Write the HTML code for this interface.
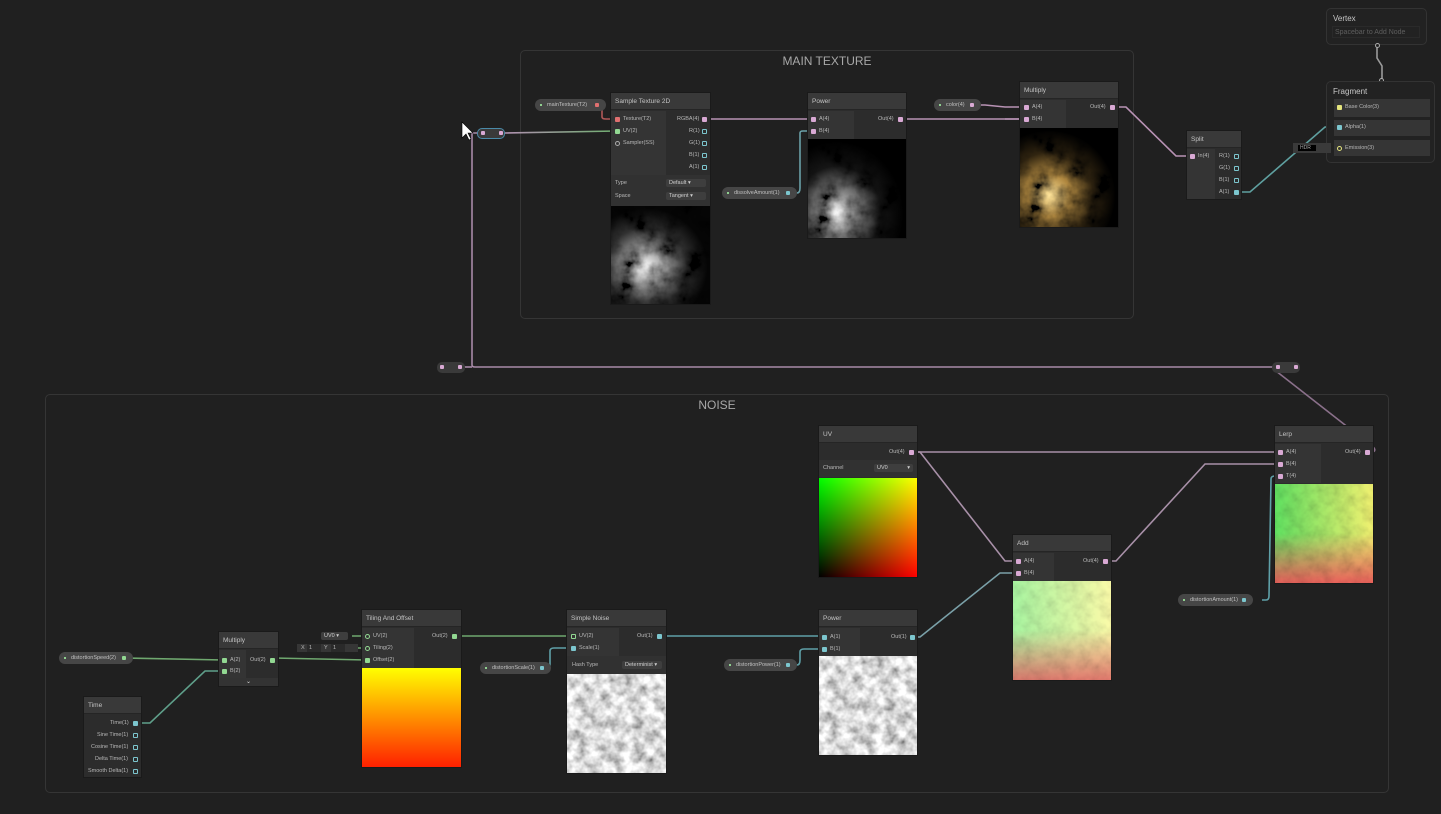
<!DOCTYPE html>
<html><head><meta charset="utf-8"><style>
*{margin:0;padding:0;box-sizing:border-box}
body{width:1441px;height:814px;background:#202020;position:relative;overflow:hidden;font-family:"Liberation Sans",sans-serif}
.g{position:absolute;border:1px solid #353535;border-radius:5px}
.gt{position:absolute;left:0;right:0;top:3px;text-align:center;color:#a8a8a8;font-size:12px}
.n{position:absolute;background:#2c2c2c;outline:1px solid #1a1a1a}
.h{position:absolute;left:0;right:0;top:0;height:17px;background:#393939;color:#c4c4c4;font-size:6.5px;line-height:17px;padding-left:4px;border-bottom:1px solid #252525}
.ic{position:absolute;background:#343434}
.t{position:absolute;font-size:5.5px;color:#b8b8b8;white-space:nowrap;line-height:7px}
.p{position:absolute;width:5px;height:5px;border-radius:1px}
.pill{position:absolute;height:12px;border-radius:6px;background:#464646;color:#c0c0c0;font-size:5.5px;line-height:12px;padding-left:12px;white-space:nowrap}
.pill:before{content:"";position:absolute;left:5px;top:5px;width:2px;height:2px;background:#8fd08f}
.dd{position:absolute;background:#3e3e3e;border-radius:2px;color:#d0d0d0;font-size:5.5px;line-height:8px;padding-left:3px}
.pk{background:#d9a9d4}.gr{background:#92d892}.tl{background:#7cc6ce}.rd{background:#e07070}.yl{background:#e4e47c}
.ho{background:transparent;border:1px solid #7cc6ce}
svg{position:absolute;left:0;top:0}
.img{position:absolute;overflow:hidden}
.img>div,.img>svg{position:absolute;left:0;top:0;width:100%;height:100%}
</style></head><body>
<svg width="10" height="10" style="position:absolute;left:-20px">
<defs>
<filter id="cl" x="0" y="0" width="100%" height="100%"><feTurbulence type="fractalNoise" baseFrequency="0.045" numOctaves="4" seed="3"/><feColorMatrix type="matrix" values="2.4 0 0 0 -0.7  2.4 0 0 0 -0.7  2.4 0 0 0 -0.7  0 0 0 0 1"/></filter>
<filter id="sn" x="0" y="0" width="100%" height="100%"><feTurbulence type="fractalNoise" baseFrequency="0.09" numOctaves="3" seed="7"/><feColorMatrix type="matrix" values="1.5 0 0 0 -0.05  1.5 0 0 0 -0.05  1.5 0 0 0 -0.05  0 0 0 0 1"/></filter>
</defs></svg>

<div class="g" style="left:520px;top:50px;width:614px;height:269px"><div class="gt">MAIN TEXTURE</div></div>
<div class="g" style="left:45px;top:394px;width:1344px;height:399px"><div class="gt">NOISE</div></div>

<svg width="1441" height="814" fill="none" stroke-width="1.6">
<defs>
<linearGradient id="pg" x1="0" x2="1"><stop offset="0" stop-color="#b090b0"/><stop offset="1" stop-color="#70b070"/></linearGradient>
<linearGradient id="py" x1="0" x2="1"><stop offset="0" stop-color="#c8a0c8"/><stop offset="1" stop-color="#c8c878"/></linearGradient>
</defs>
<path d="M596 105 H600 Q602 105 602 110 V117 Q602 119 606 119 H617" stroke="#b05858"/>
<path d="M505 133 L617 131" stroke="url(#pg)"/>
<path d="M480 133 H472 V365 Q472 367 475 367 H1278" stroke="#a88aa8"/>
<path d="M460 367 H472" stroke="#a88aa8"/>
<path d="M1278 367 L1276 371 L1372 446 Q1377 450 1373 452" stroke="#8a708a"/>
<path d="M705 119 H813" stroke="#b892b4"/>
<path d="M787 193 H797 Q800 193 800 188 V133 Q800 131 803 131 H813" stroke="#6aa0a8"/>
<path d="M901 119 H1025" stroke="#b892b4"/>
<path d="M971 105 H985 L1005 107 H1025" stroke="#b892b4"/>
<path d="M1005 119 H1025" stroke="#b892b4"/>
<path d="M1113 107 L1339 107" stroke="url(#py)"/>
<path d="M1113 107 H1126 L1176 156 H1192" stroke="#b892b4"/>
<path d="M1236 192 H1250 L1325 127 H1338" stroke="#5fa0a0"/>
<path d="M1331 148 H1338" stroke="#c8c878"/>
<path d="M1377 46 V58 L1382 66 V81" stroke="#9a9a9a"/>
<path d="M125 658 L224 660" stroke="#6fa86f"/>
<path d="M136 723 H150 L205 671 H224" stroke="#5f9f8a"/>
<path d="M273 658 L367 660" stroke="#6fa86f"/>
<path d="M352 636 H367 M352 648 H367" stroke="#6fa86f"/>
<path d="M456 636 H572" stroke="#6fa86f"/>
<path d="M541 668 H548 Q550 668 550 664 V651 Q550 648 554 648 H572" stroke="#5fa0a8"/>
<path d="M660 636 H824" stroke="#5fa0a8"/>
<path d="M788 665 H797 Q800 665 800 660 V652 Q800 649 804 649 H824" stroke="#5fa0a8"/>
<path d="M912 637 H920 L1000 573 H1018" stroke="#7aa0a8"/>
<path d="M912 452 H920 L1005 561 H1018" stroke="#a890a8"/>
<path d="M912 452 H1280" stroke="#a890a8"/>
<path d="M1106 561 H1116 L1205 464 H1280" stroke="#a890a8"/>
<path d="M1262 600 H1266 Q1269 600 1269 596 L1271 479 Q1271 476 1275 476 H1280" stroke="#5fa0a8"/>
</svg>

<div style="position:absolute;left:477px;top:128px;width:28px;height:11px;border-radius:5px;background:#3a3a3a;border:1px solid #4a8aa8"></div>
<div class="p pk" style="left:481px;top:131px;width:4px;height:4px"></div><div class="p pk" style="left:499px;top:131px;width:4px;height:4px"></div>
<div style="position:absolute;left:437px;top:362px;width:28px;height:11px;border-radius:5px;background:#3a3a3a"></div>
<div class="p pk" style="left:440px;top:365px;width:4px;height:4px"></div><div class="p pk" style="left:458px;top:365px;width:4px;height:4px"></div>
<div style="position:absolute;left:1272px;top:362px;width:28px;height:11px;border-radius:5px;background:#3a3a3a"></div>
<div class="p pk" style="left:1276px;top:365px;width:4px;height:4px"></div><div class="p pk" style="left:1294px;top:365px;width:4px;height:4px"></div>
<svg width="1441" height="814" style="pointer-events:none"><path d="M462 122 L462 138 L466 134 L469 140 L471 139 L468 133 L473 133 Z" fill="#fff" stroke="#000" stroke-width="0.6"/></svg>

<div class="pill" style="left:535px;top:99px;width:71px">mainTexture(T2)<span class="p rd" style="left:60px;top:4px;width:4px;height:4px"></span></div>
<div class="pill" style="left:934px;top:99px;width:47px">color(4)<span class="p pk" style="left:36px;top:4px;width:4px;height:4px"></span></div>
<div class="pill" style="left:722px;top:187px;width:75px">dissolveAmount(1)<span class="p tl" style="left:64px;top:4px;width:4px;height:4px"></span></div>
<div class="pill" style="left:59px;top:652px;width:74px">distortionSpeed(2)<span class="p gr" style="left:63px;top:4px;width:4px;height:4px"></span></div>
<div class="pill" style="left:480px;top:662px;width:71px">distortionScale(1)<span class="p tl" style="left:60px;top:4px;width:4px;height:4px"></span></div>
<div class="pill" style="left:724px;top:659px;width:73px">distortionPower(1)<span class="p tl" style="left:62px;top:4px;width:4px;height:4px"></span></div>
<div class="pill" style="left:1178px;top:594px;width:75px">distortionAmount(1)<span class="p tl" style="left:64px;top:4px;width:4px;height:4px"></span></div>

<!-- Sample Texture 2D -->
<div class="n" style="left:611px;top:93px;width:99px;height:211px">
<div class="h">Sample Texture 2D</div>
<div class="ic" style="left:0;top:18px;width:55px;height:64px"></div>
<div style="position:absolute;left:0;top:82px;width:99px;height:31px;background:#313131"></div>
<div class="t" style="left:4px;top:87px">Type</div><div class="t" style="left:4px;top:100px">Space</div>
<div class="dd" style="left:55px;top:86px;width:40px">Default ▾</div>
<div class="dd" style="left:55px;top:99px;width:40px">Tangent ▾</div>
<div class="img" style="left:0;top:113px;width:99px;height:98px"><svg width="99" height="98"><rect width="99" height="98" filter="url(#cl)"/></svg><div style="background:radial-gradient(ellipse at 35% 62%,#fff 0%,#a0a0a0 20%,#303030 45%,#050505 68%);mix-blend-mode:multiply"></div></div>
</div>
<div class="p rd" style="left:615px;top:117px"></div><div class="t" style="left:623px;top:116px">Texture(T2)</div>
<div class="p gr" style="left:615px;top:129px"></div><div class="t" style="left:623px;top:128px">UV(2)</div>
<div class="p ho" style="left:615px;top:141px;border-color:#aaa;border-radius:3px"></div><div class="t" style="left:623px;top:140px">Sampler(SS)</div>
<div class="t" style="left:677px;top:116px">RGBA(4)</div><div class="p pk" style="left:702px;top:117px"></div>
<div class="t" style="left:689px;top:128px">R(1)</div><div class="p ho" style="left:702px;top:129px"></div>
<div class="t" style="left:689px;top:140px">G(1)</div><div class="p ho" style="left:702px;top:141px"></div>
<div class="t" style="left:689px;top:152px">B(1)</div><div class="p ho" style="left:702px;top:153px"></div>
<div class="t" style="left:689px;top:164px">A(1)</div><div class="p ho" style="left:702px;top:165px"></div>

<!-- Power top -->
<div class="n" style="left:808px;top:93px;width:98px;height:145px">
<div class="h">Power</div>
<div class="ic" style="left:0;top:18px;width:46px;height:28px"></div>
<div class="img" style="left:0;top:46px;width:98px;height:99px"><svg width="98" height="99"><rect width="98" height="99" filter="url(#cl)"/></svg><div style="background:radial-gradient(ellipse at 30% 75%,#fff 0%,#888 20%,#151515 45%,#000 68%);mix-blend-mode:multiply"></div></div>
</div>
<div class="p pk" style="left:811px;top:117px"></div><div class="t" style="left:819px;top:116px">A(4)</div>
<div class="p pk" style="left:811px;top:129px"></div><div class="t" style="left:819px;top:128px">B(4)</div>
<div class="t" style="left:878px;top:116px">Out(4)</div><div class="p pk" style="left:898px;top:117px"></div>

<!-- Multiply top -->
<div class="n" style="left:1020px;top:82px;width:98px;height:145px">
<div class="h">Multiply</div>
<div class="ic" style="left:0;top:18px;width:46px;height:28px"></div>
<div class="img" style="left:0;top:46px;width:98px;height:99px"><svg width="98" height="99"><rect width="98" height="99" filter="url(#cl)"/></svg><div style="background:radial-gradient(ellipse at 30% 68%,#ffe49a 0%,#b08840 22%,#302410 45%,#000 68%);mix-blend-mode:multiply"></div></div>
</div>
<div class="p pk" style="left:1024px;top:105px"></div><div class="t" style="left:1032px;top:104px">A(4)</div>
<div class="p pk" style="left:1024px;top:117px"></div><div class="t" style="left:1032px;top:116px">B(4)</div>
<div class="t" style="left:1090px;top:104px">Out(4)</div><div class="p pk" style="left:1110px;top:105px"></div>

<!-- Split -->
<div class="n" style="left:1187px;top:131px;width:54px;height:68px">
<div class="h">Split</div>
<div class="ic" style="left:0;top:18px;width:28px;height:50px"></div>
</div>
<div class="p pk" style="left:1190px;top:154px"></div><div class="t" style="left:1198px;top:153px">In(4)</div>
<div class="t" style="left:1219px;top:153px">R(1)</div><div class="p ho" style="left:1234px;top:154px"></div>
<div class="t" style="left:1219px;top:165px">G(1)</div><div class="p ho" style="left:1234px;top:166px"></div>
<div class="t" style="left:1219px;top:177px">B(1)</div><div class="p ho" style="left:1234px;top:178px"></div>
<div class="t" style="left:1219px;top:189px">A(1)</div><div class="p tl" style="left:1234px;top:190px"></div>

<!-- Vertex / Fragment -->
<div style="position:absolute;left:1326px;top:8px;width:101px;height:37px;border:1px solid #333;border-radius:5px;background:#222">
<div style="position:absolute;left:6px;top:5px;color:#c8c8c8;font-size:8px">Vertex</div>
<div style="position:absolute;left:5px;top:17px;width:88px;height:12px;border:1px solid #2a2a2a;color:#5e5e5e;font-size:7px;line-height:11px;padding-left:2px;white-space:nowrap">Spacebar to Add Node</div></div>
<div style="position:absolute;left:1375px;top:43px;width:5px;height:5px;border:1px solid #aaa;border-radius:3px;background:#222"></div>
<div style="position:absolute;left:1379px;top:78px;width:5px;height:5px;border:1px solid #aaa;border-radius:3px;background:#222"></div>
<div style="position:absolute;left:1326px;top:81px;width:109px;height:82px;border:1px solid #333;border-radius:5px;background:#222">
<div style="position:absolute;left:6px;top:5px;color:#c8c8c8;font-size:8px">Fragment</div>
<div style="position:absolute;left:7px;top:17px;width:96px;height:18px;background:#353535"></div>
<div style="position:absolute;left:7px;top:38px;width:96px;height:16px;background:#353535"></div>
<div style="position:absolute;left:7px;top:58px;width:96px;height:16px;background:#353535"></div>
</div>
<div class="p yl" style="left:1337px;top:105px"></div><div class="t" style="left:1345px;top:104px">Base Color(3)</div>
<div class="p tl" style="left:1337px;top:125px"></div><div class="t" style="left:1345px;top:124px">Alpha(1)</div>
<div class="p ho" style="left:1337px;top:146px;border-color:#e4e47c;border-radius:3px"></div><div class="t" style="left:1345px;top:145px">Emission(3)</div>
<div style="position:absolute;left:1293px;top:143px;width:38px;height:10px;background:#3a3a3a"><div style="position:absolute;left:5px;top:2px;width:18px;height:6px;background:#000;color:#aaa;font-size:5px;line-height:6px;padding-left:2px">HDR</div></div>

<!-- UV -->
<div class="n" style="left:819px;top:426px;width:98px;height:151px">
<div class="h">UV</div>
<div style="position:absolute;left:0;top:34px;width:98px;height:17px;background:#313131"></div>
<div class="t" style="left:4px;top:39px">Channel</div>
<div class="dd" style="left:55px;top:38px;width:39px">UV0<span style="position:absolute;right:3px">▾</span></div>
<div class="img" style="left:0;top:52px;width:98px;height:99px"><div style="background:linear-gradient(to right,#000,#ff0000)"></div><div style="background:linear-gradient(to top,#000,#00ff00);mix-blend-mode:screen"></div></div>
</div>
<div class="t" style="left:889px;top:449px">Out(4)</div><div class="p pk" style="left:909px;top:450px"></div>

<!-- Lerp -->
<div class="n" style="left:1275px;top:426px;width:98px;height:157px">
<div class="h">Lerp</div>
<div class="ic" style="left:0;top:18px;width:46px;height:39px"></div>
<div class="img" style="left:0;top:58px;width:98px;height:99px"><div style="background:linear-gradient(to top,rgba(235,90,90,.95),rgba(235,90,90,0) 50%),linear-gradient(to right,#60e060,#f0f070)"></div><svg width="98" height="99" style="opacity:.3;mix-blend-mode:multiply"><rect width="98" height="99" filter="url(#sn)"/></svg></div>
</div>
<div class="p pk" style="left:1278px;top:450px"></div><div class="t" style="left:1286px;top:449px">A(4)</div>
<div class="p pk" style="left:1278px;top:462px"></div><div class="t" style="left:1286px;top:461px">B(4)</div>
<div class="p pk" style="left:1278px;top:474px"></div><div class="t" style="left:1286px;top:473px">T(4)</div>
<div class="t" style="left:1345px;top:449px">Out(4)</div><div class="p pk" style="left:1365px;top:450px"></div>

<!-- Add -->
<div class="n" style="left:1013px;top:535px;width:98px;height:145px">
<div class="h">Add</div>
<div class="ic" style="left:0;top:18px;width:41px;height:28px"></div>
<div class="img" style="left:0;top:46px;width:98px;height:99px"><div style="background:linear-gradient(to top,rgba(225,100,100,.85),rgba(225,100,100,0) 50%),linear-gradient(to right,#a8f4a0,#fafaa8)"></div><svg width="98" height="99" style="opacity:.25;mix-blend-mode:multiply"><rect width="98" height="99" filter="url(#sn)"/></svg></div>
</div>
<div class="p pk" style="left:1016px;top:559px"></div><div class="t" style="left:1024px;top:558px">A(4)</div>
<div class="p pk" style="left:1016px;top:571px"></div><div class="t" style="left:1024px;top:570px">B(4)</div>
<div class="t" style="left:1083px;top:558px">Out(4)</div><div class="p pk" style="left:1103px;top:559px"></div>

<!-- Power noise -->
<div class="n" style="left:819px;top:610px;width:98px;height:145px">
<div class="h">Power</div>
<div class="ic" style="left:0;top:18px;width:41px;height:28px"></div>
<div class="img" style="left:0;top:46px;width:98px;height:99px"><svg width="98" height="99"><rect width="98" height="99" filter="url(#sn)"/></svg></div>
</div>
<div class="p tl" style="left:822px;top:635px"></div><div class="t" style="left:830px;top:634px">A(1)</div>
<div class="p tl" style="left:822px;top:647px"></div><div class="t" style="left:830px;top:646px">B(1)</div>
<div class="t" style="left:891px;top:634px">Out(1)</div><div class="p tl" style="left:910px;top:635px"></div>

<!-- Simple Noise -->
<div class="n" style="left:567px;top:610px;width:99px;height:163px">
<div class="h">Simple Noise</div>
<div class="ic" style="left:0;top:18px;width:52px;height:28px"></div>
<div style="position:absolute;left:0;top:46px;width:99px;height:18px;background:#313131"></div>
<div class="t" style="left:5px;top:52px">Hash Type</div>
<div class="dd" style="left:55px;top:51px;width:40px">Determinist ▾</div>
<div class="img" style="left:0;top:64px;width:99px;height:99px"><svg width="99" height="99"><rect width="99" height="99" filter="url(#sn)"/></svg></div>
</div>
<div class="p ho" style="left:571px;top:634px;border-color:#92d892"></div><div class="t" style="left:579px;top:633px">UV(2)</div>
<div class="p tl" style="left:571px;top:646px"></div><div class="t" style="left:579px;top:645px">Scale(1)</div>
<div class="t" style="left:637px;top:633px">Out(1)</div><div class="p tl" style="left:657px;top:634px"></div>

<!-- Tiling And Offset -->
<div class="n" style="left:362px;top:610px;width:99px;height:157px">
<div class="h">Tiling And Offset</div>
<div class="ic" style="left:0;top:18px;width:52px;height:40px"></div>
<div style="position:absolute;left:0;top:58px;width:99px;height:99px;background:linear-gradient(#ffff00,#ff2000)"></div>
</div>
<div class="p ho" style="left:365px;top:634px;border-color:#92d892;border-radius:3px"></div><div class="t" style="left:373px;top:633px">UV(2)</div>
<div class="p ho" style="left:365px;top:646px;border-color:#92d892;border-radius:3px"></div><div class="t" style="left:373px;top:645px">Tiling(2)</div>
<div class="p gr" style="left:365px;top:658px"></div><div class="t" style="left:373px;top:657px">Offset(2)</div>
<div class="t" style="left:432px;top:633px">Out(2)</div><div class="p gr" style="left:452px;top:634px"></div>
<div class="dd" style="left:321px;top:632px;width:27px;height:8px">UV0 ▾</div>
<div style="position:absolute;left:297px;top:644px;width:61px;height:8px;background:#363636"></div>
<div class="t" style="left:301px;top:645px">X</div><div style="position:absolute;left:307px;top:644px;width:14px;height:8px;background:#2a2a2a"></div><div class="t" style="left:309px;top:645px">1</div>
<div class="t" style="left:324px;top:645px">Y</div><div style="position:absolute;left:331px;top:644px;width:14px;height:8px;background:#2a2a2a"></div><div class="t" style="left:333px;top:645px">1</div>

<!-- Multiply noise -->
<div class="n" style="left:219px;top:632px;width:59px;height:54px">
<div class="h">Multiply</div>
<div class="ic" style="left:0;top:18px;width:27px;height:28px"></div>
<div style="position:absolute;left:0;top:46px;width:59px;height:8px;background:#333;color:#ddd;font-size:6px;text-align:center;line-height:8px">⌄</div>
</div>
<div class="p gr" style="left:222px;top:658px"></div><div class="t" style="left:230px;top:657px">A(2)</div>
<div class="p gr" style="left:222px;top:669px"></div><div class="t" style="left:230px;top:668px">B(2)</div>
<div class="t" style="left:250px;top:657px">Out(2)</div><div class="p gr" style="left:270px;top:658px"></div>

<!-- Time -->
<div class="n" style="left:84px;top:697px;width:57px;height:80px">
<div class="h">Time</div>
</div>
<div class="t" style="left:110px;top:720px">Time(1)</div><div class="p tl" style="left:133px;top:721px"></div>
<div class="t" style="left:97px;top:732px">Sine Time(1)</div><div class="p ho" style="left:133px;top:733px"></div>
<div class="t" style="left:91px;top:744px">Cosine Time(1)</div><div class="p ho" style="left:133px;top:745px"></div>
<div class="t" style="left:95px;top:756px">Delta Time(1)</div><div class="p ho" style="left:133px;top:757px"></div>
<div class="t" style="left:88px;top:768px">Smooth Delta(1)</div><div class="p ho" style="left:133px;top:769px"></div>
</body></html>
